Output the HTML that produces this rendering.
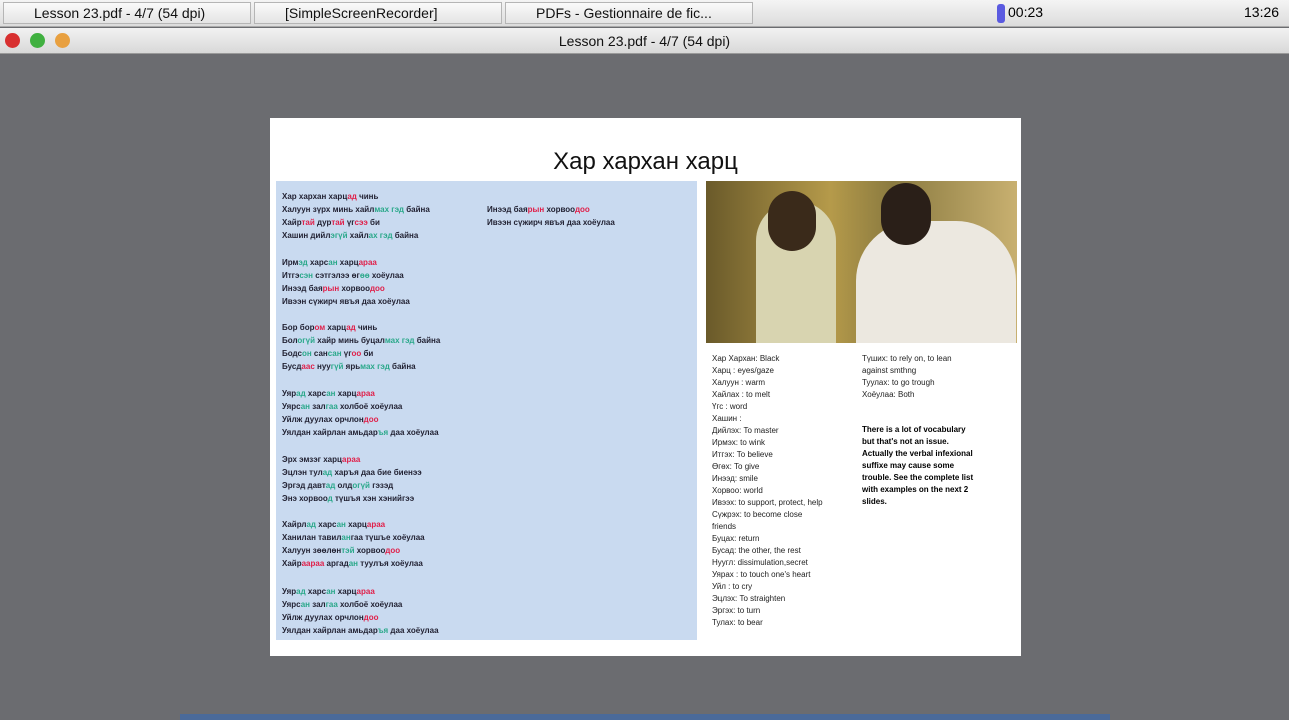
<!DOCTYPE html>
<html><head><meta charset="utf-8"><style>
*{margin:0;padding:0;box-sizing:border-box}
body{width:1289px;height:720px;background:#6b6c70;font-family:"Liberation Sans",sans-serif;position:relative;overflow:hidden}
.tb{position:absolute;left:0;top:0;width:1289px;height:27px;background:linear-gradient(#f4f4f4,#dcdcdc);border-bottom:1px solid #aaa}
.tab{position:absolute;top:2px;height:22px;border:1px solid #b5b5b5;background:linear-gradient(#fafafa,#e4e4e4);font-size:14px;line-height:21px;padding-left:30px;color:#111}
.wt{position:absolute;left:0;top:28px;width:1289px;height:26px;background:linear-gradient(#f2f2f2,#d8d8d8);border-bottom:1px solid #999;text-align:center;font-size:14px;line-height:26px;color:#111}
.btn{position:absolute;top:33px;width:15px;height:15px;border-radius:50%}
.slide{position:absolute;left:270px;top:118px;width:751px;height:538px;background:#fff}
.title{position:absolute;left:0;width:751px;top:30px;text-align:center;font-size:24px;color:#111}
.blue{position:absolute;left:6px;top:63px;width:421px;height:459px;background:#c9daf0}
.l{position:absolute;font-size:8px;font-weight:bold;color:#223;white-space:nowrap}
.r{color:#e0204a}.g{color:#2aa88a}
.photo{position:absolute;left:436px;top:63px;width:311px;height:162px;background:linear-gradient(90deg,#6a5a2a,#b59a4a 40%,#8a7a40 60%,#c8b070);overflow:hidden}
.v{position:absolute;font-size:8px;color:#222;white-space:nowrap;line-height:12px}
.bot{position:absolute;left:180px;top:714px;width:930px;height:6px;background:#4a6a9a}
</style></head><body>
<div class="tb">
<div class="tab" style="left:3px;width:248px">Lesson 23.pdf - 4/7 (54 dpi)</div>
<div class="tab" style="left:254px;width:248px">[SimpleScreenRecorder]</div>
<div class="tab" style="left:505px;width:248px">PDFs - Gestionnaire de fic...</div>
<div style="position:absolute;left:997px;top:4px;width:8px;height:19px;background:#5a5ae0;border-radius:3px"></div>
<div style="position:absolute;left:1008px;top:4px;font-size:14px">00:23</div>
<div style="position:absolute;left:1244px;top:4px;font-size:14px">13:26</div>
</div>
<div class="wt">Lesson 23.pdf - 4/7 (54 dpi)</div>
<div class="btn" style="left:5px;background:#d83030"></div>
<div class="btn" style="left:30px;background:#40b040"></div>
<div class="btn" style="left:55px;background:#e8a040"></div>
<div class="slide">
<div class="title">Хар хархан харц</div>
<div class="blue"></div>
<div id="L"></div>
<div class="photo">
<div style="position:absolute;left:50px;top:20px;width:80px;height:142px;background:#d8d4b0;border-radius:40px 40px 0 0"></div>
<div style="position:absolute;left:62px;top:10px;width:48px;height:60px;background:#3a2a1a;border-radius:24px"></div>
<div style="position:absolute;left:150px;top:40px;width:160px;height:122px;background:#ece8e0;border-radius:60px 60px 0 0"></div>
<div style="position:absolute;left:175px;top:2px;width:50px;height:62px;background:#2a1f18;border-radius:25px"></div>
</div>
<div class="v" style="left:442px;top:235px">Хар Хархан: Black<br>Харц : eyes/gaze<br>Халуун : warm<br>Хайлах : to melt<br>Үгс : word<br>Хашин :<br>Дийлэх: To master<br>Ирмэх: to wink<br>Итгэх: To believe<br>Өгөх: To give<br>Инээд: smile<br>Хорвоо: world<br>Ивээх: to support, protect, help<br>Сүжрэх: to become close<br>friends<br>Буцах: return<br>Бусад: the other, the rest<br>Нуугл: dissimulation,secret<br>Уярах : to touch one's heart<br>Уйл : to cry<br>Эцлэх: To straighten<br>Эргэх: to turn<br>Тулах: to bear</div>
<div class="v" style="left:592px;top:235px">Түших: to rely on, to lean<br>against smthng<br>Туулах: to go trough<br>Хоёулаа: Both</div>
<div class="v" style="left:592px;top:306px;font-weight:bold;color:#000">There is a lot of vocabulary<br>but that's not an issue.<br>Actually the verbal infexional<br>suffixe may cause some<br>trouble. See the complete list<br>with examples on the next 2<br>slides.</div>
</div>
<div class="bot"></div>
<script>
var g=[[74,"Хар хархан харц<span class=r>ад</span> чинь","Халуун зүрх минь хайл<span class=g>мах гэд</span> байна","Хайр<span class=r>тай</span> дур<span class=r>тай</span> үг<span class=r>сээ</span> би","Хашин дийл<span class=g>эгүй</span> хайл<span class=g>ах гэд</span> байна"],
[140,"Ирм<span class=g>эд</span> харс<span class=g>ан</span> харц<span class=r>араа</span>","Итгэ<span class=g>сэн</span> сэтгэлээ өг<span class=g>өө</span> хоёулаа","Инээд бая<span class=r>рын</span> хорвоо<span class=r>доо</span>","Ивээн сүжирч явъя даа хоёулаа"],
[205,"Бор бор<span class=r>ом</span> харц<span class=r>ад</span> чинь","Бол<span class=g>огүй</span> хайр минь буцал<span class=g>мах гэд</span> байна","Бодс<span class=g>он</span> сан<span class=g>сан</span> үг<span class=r>оо</span> би","Бусд<span class=r>аас</span> нуу<span class=g>гүй</span> ярь<span class=g>мах гэд</span> байна"],
[271,"Уяр<span class=g>ад</span> харс<span class=g>ан</span> харц<span class=r>араа</span>","Уярс<span class=g>ан</span> зал<span class=g>гаа</span> холбоё хоёулаа","Уйлж дуулах орчлон<span class=r>доо</span>","Уялдан хайрлан амьдар<span class=g>ъя</span> даа хоёулаа"],
[337,"Эрх эмзэг харц<span class=r>араа</span>","Эцлэн тул<span class=g>ад</span> харъя даа бие биенээ","Эргэд давт<span class=g>ад</span> олд<span class=g>огүй</span> гэзэд","Энэ хорвоо<span class=g>д</span> түшъя хэн хэнийгээ"],
[402,"Хайрл<span class=g>ад</span> харс<span class=g>ан</span> харц<span class=r>араа</span>","Ханилан тавил<span class=g>ан</span>гаа түшъе хоёулаа","Халуун зөөлөн<span class=g>тэй</span> хорвоо<span class=r>доо</span>","Хайр<span class=r>аараа</span> аргад<span class=g>ан</span> туулъя хоёулаа"],
[469,"Уяр<span class=g>ад</span> харс<span class=g>ан</span> харц<span class=r>араа</span>","Уярс<span class=g>ан</span> зал<span class=g>гаа</span> холбоё хоёулаа","Уйлж дуулах орчлон<span class=r>доо</span>","Уялдан хайрлан амьдар<span class=g>ъя</span> даа хоёулаа"]];
var h="";g.forEach(function(a){for(var i=1;i<a.length;i++)h+='<div class="l" style="left:12px;top:'+(a[0]+(i-1)*13)+'px">'+a[i]+'</div>';});
h+='<div class="l" style="left:217px;top:87px">Инээд бая<span class=r>рын</span> хорвоо<span class=r>доо</span></div><div class="l" style="left:217px;top:100px">Ивээн сүжирч явъя даа хоёулаа</div>';
document.getElementById("L").innerHTML=h;
</script>
</body></html>
